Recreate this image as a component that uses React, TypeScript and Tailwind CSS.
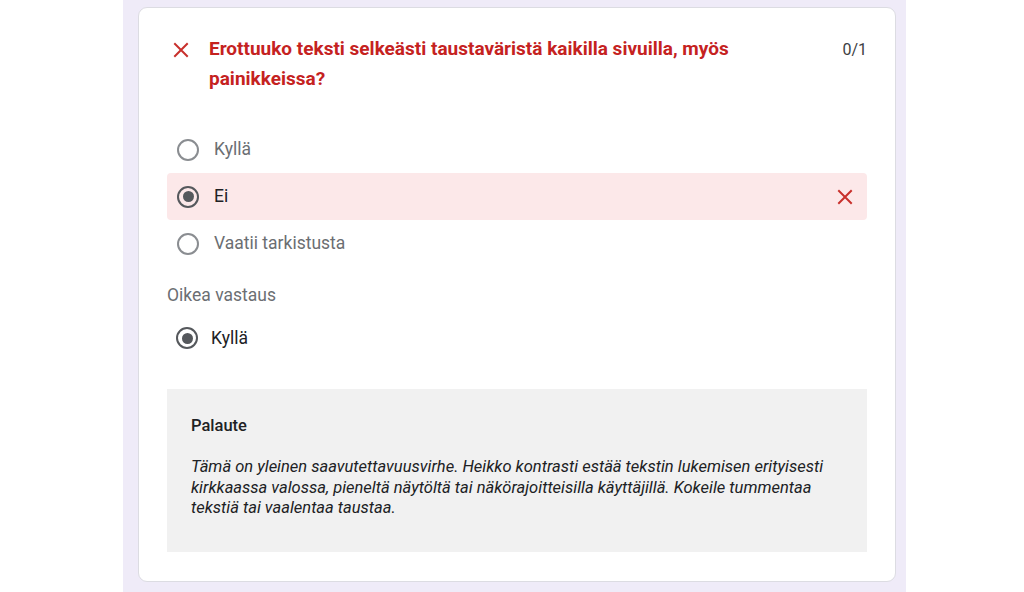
import React from "react";

const XIcon = ({ className }: { className?: string }) => (
  <svg viewBox="0 0 16 16" className={className} fill="none" stroke="currentColor" strokeWidth="2" strokeLinecap="square">
    <path d="M2 2 L14 14 M14 2 L2 14" />
  </svg>
);

const Radio = ({ checked }: { checked?: boolean }) => (
  <span
    className={
      "flex h-[22px] w-[22px] shrink-0 items-center justify-center rounded-full border-2 " +
      (checked ? "border-[#55585c]" : "border-[#8a8d91]")
    }
  >
    {checked && <span className="h-[11px] w-[11px] rounded-full bg-[#55585c]" />}
  </span>
);

export default function App() {
  return (
    <div className="flex h-[592px] w-full bg-white" style={{ fontFamily: "Roboto, 'Noto Sans', sans-serif" }}>
      <div className="ml-[123px] h-full w-[783px] bg-[#efebf8] pt-[7px]">
        <div className="ml-[15px] h-[575px] w-[758px] rounded-[9px] border border-[#dcdce2] bg-white px-[28px] pt-[26px]">
          <div className="flex items-start">
            <XIcon className="ml-[6px] mt-[8px] h-[16px] w-[16px] shrink-0 text-[#c8302c]" />
            <div className="ml-[20px] w-[560px] text-[19px] font-bold leading-[30px] text-[#c5221f]">
              Erottuuko teksti selkeästi taustaväristä kaikilla sivuilla, myös painikkeissa?
            </div>
            <div className="ml-auto mt-[1px] text-[16px] leading-[30px] text-[#3c4043]">0/1</div>
          </div>

          <div className="mt-[32px] flex flex-col">
            <div className="flex h-[47px] items-center pl-[10px]">
              <Radio />
              <span className="ml-[15px] text-[17.5px] text-[#6b6e72]">Kyllä</span>
            </div>
            <div className="flex h-[47px] items-center rounded-[4px] bg-[#fce8e9] pl-[10px] pr-[14px]">
              <Radio checked />
              <span className="ml-[15px] text-[17.5px] text-[#202124]">Ei</span>
              <XIcon className="ml-auto h-[16px] w-[16px] text-[#c8302c]" />
            </div>
            <div className="flex h-[47px] items-center pl-[10px]">
              <Radio />
              <span className="ml-[15px] text-[17.5px] text-[#6b6e72]">Vaatii tarkistusta</span>
            </div>
          </div>

          <div className="mt-[18px] text-[17.5px] leading-[20px] text-[#6b6e72]">Oikea vastaus</div>
          <div className="mt-[13px] flex h-[40px] items-center pl-[9px]">
            <Radio checked />
            <span className="ml-[13px] text-[17.5px] text-[#202124]">Kyllä</span>
          </div>

          <div className="mt-[31px] h-[163px] bg-[#f1f1f1] px-[24px] pt-[27px]">
            <div className="text-[16.5px] font-medium leading-[20px] text-[#202124]">Palaute</div>
            <p className="mt-[21px] w-[650px] text-[16.5px] italic leading-[20.5px] text-[#202124]">
              Tämä on yleinen saavutettavuusvirhe. Heikko kontrasti estää tekstin lukemisen erityisesti kirkkaassa valossa, pieneltä näytöltä tai näkörajoitteisilla käyttäjillä. Kokeile tummentaa tekstiä tai vaalentaa taustaa.
            </p>
          </div>
        </div>
      </div>
    </div>
  );
}
